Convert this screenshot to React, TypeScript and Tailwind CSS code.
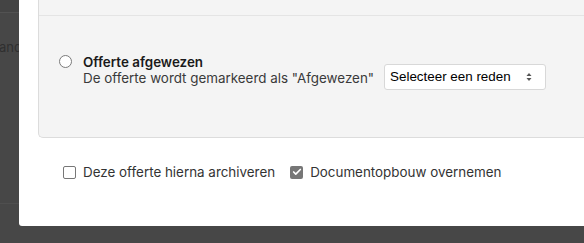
import { Check } from 'lucide-react';

const App = () => {
  return (
    <div className="flex h-[243px] w-[584px] overflow-hidden bg-[#474747] font-['Inter',sans-serif]">
      <div className="flex w-[19px] shrink-0 flex-col overflow-hidden">
        <div className="h-[13px] border-b border-[#525252] bg-[#444444]" />
        <div className="relative h-[191px] border-b border-[#4f4f4f]">
          <span className="absolute right-[-3px] top-[26px] text-[13px] leading-4 text-[#2f2f2f]">
            and
          </span>
        </div>
      </div>

      <div className="flex h-[226px] flex-1 flex-col rounded-bl-[3px] bg-white pl-[19px]">
        <div className="h-[138px] rounded-bl-[5px] border-b border-l border-[#dcdcdc] bg-[#f4f4f4]">
          <div className="h-[16px] border-b border-[#e4e4e4]" />
          <div className="flex items-start pl-[20px] pt-[38px]">
            <span className="mt-[1px] h-[13px] w-[13px] shrink-0 rounded-full border border-[#7a7a7a] bg-white" />
            <div className="ml-[11px] text-[13.4px] leading-[16px]">
              <div className="font-semibold text-[#1a1a1a]">Offerte afgewezen</div>
              <div className="text-[#3a3a3a]">
                De offerte wordt gemarkeerd als &quot;Afgewezen&quot;
              </div>
            </div>
            <div className="ml-[10px] mt-[10px] flex h-[26px] w-[162px] items-center justify-between rounded-[3px] border border-[#d8d8d8] bg-white pl-[5px] pr-[13px] font-['Liberation_Sans',sans-serif] text-[13.4px] text-black">
              <span>Selecteer een reden</span>
              <svg width="6" height="10" viewBox="0 0 6 10" className="text-[#555]">
                <path d="M3 1 L5.5 4 H0.5 Z" fill="currentColor" />
                <path d="M3 9 L5.5 6 H0.5 Z" fill="currentColor" />
              </svg>
            </div>
          </div>
        </div>

        <div className="flex items-center pl-[25px] pt-[26px] text-[13.4px] leading-4 text-[#333]">
          <span className="h-[13px] w-[13px] rounded-[2px] border border-[#777] bg-white" />
          <span className="ml-[7px]">Deze offerte hierna archiveren</span>
          <span className="ml-[15px] flex h-[13px] w-[13px] items-center justify-center rounded-[2px] bg-[#767676]">
            <Check size={10} strokeWidth={4} className="text-white" />
          </span>
          <span className="ml-[7px]">Documentopbouw overnemen</span>
        </div>
      </div>
    </div>
  );
};

export default App;
